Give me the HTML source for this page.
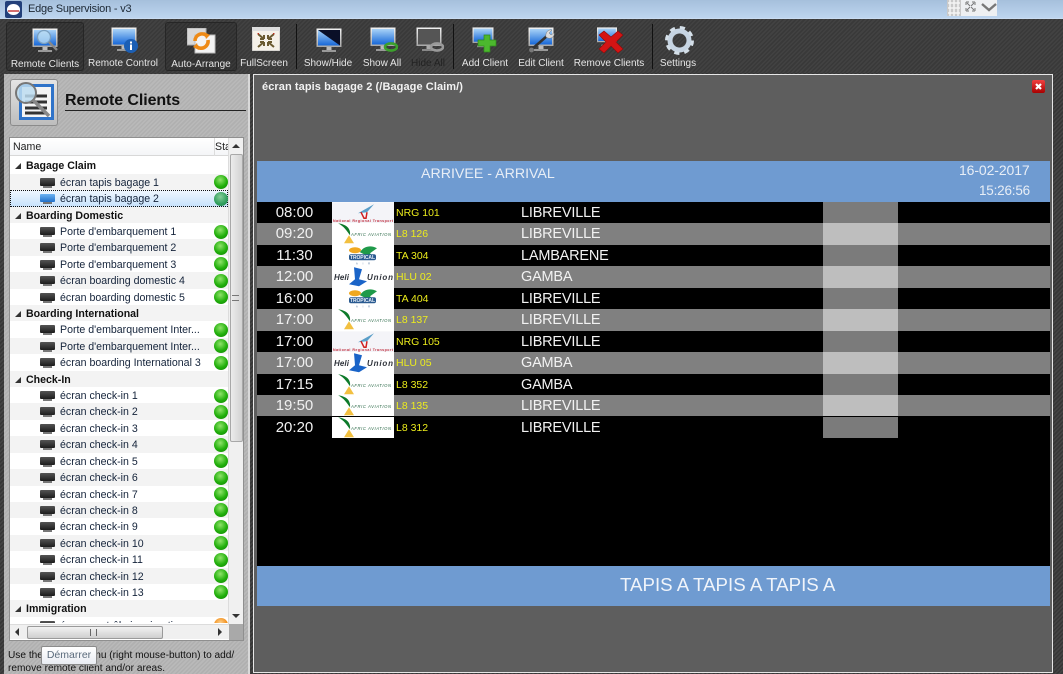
<!DOCTYPE html>
<html><head><meta charset="utf-8"><title>Edge Supervision - v3</title>
<style>
*{box-sizing:border-box}
html,body{margin:0;padding:0;background:#222}
#root{position:relative;width:1063px;height:674px;overflow:hidden;font-family:"Liberation Sans",sans-serif;background:#333;filter:blur(.25px)}
.abs,#root>div,#root>svg{position:absolute}
#title{left:0;top:0;width:1063px;height:19px;background:linear-gradient(#a6c0dc,#bdd5ef);border-bottom:1px solid #c9dcf2}
#title span{position:absolute;left:28px;top:2px;font-size:11px;letter-spacing:-.2px;color:#1c2733;line-height:15px}
#tb{left:0;top:19px;width:1063px;height:54px;background:repeating-linear-gradient(135deg,#424242 0 1.5px,#393939 1.5px 3px)}
#below{left:0;top:73px;width:1063px;height:601px;background:repeating-linear-gradient(135deg,#444 0 1.5px,#363636 1.5px 3px)}
.sel{top:22px;height:49px;border:1px solid #262626;border-radius:3px;background:repeating-linear-gradient(135deg,#393939 0 1.5px,#303030 1.5px 3px)}
.sep{top:24px;width:1px;height:45px;background:#111}
.lb{top:57px;font-size:10px;line-height:13px;color:#e6e6e6;transform:translateX(-50%);white-space:nowrap}
#left{left:4px;top:74px;width:244px;height:600px;background:repeating-linear-gradient(135deg,#b9b9b9 0 1.5px,#b0b0b0 1.5px 3px)}
#leftedge{left:248px;top:74px;width:2px;height:600px;background:#d9d9d9}
#iconbox{left:10px;top:79px;width:48px;height:47px;background:linear-gradient(#e4e4e4,#bdbdbd);border:1px solid #8b8b8b;border-radius:3px}
#h1{left:65px;top:92px;font-size:16px;line-height:18px;font-weight:bold;color:#111;letter-spacing:-.1px;white-space:nowrap}
#h1line{left:65px;top:110px;width:181px;height:1px;background:#222}
#list{left:9px;top:137px;width:235px;height:504px;background:#fff;border:1px solid #8f8f8f;overflow:hidden}
#hdr{position:absolute;left:0;top:0;width:219px;height:18px;background:linear-gradient(#fff,#f4f5f7);border-bottom:1px solid #d8d8d8;font-size:10.6px;line-height:19px;color:#222}
#hdr i{position:absolute;left:204px;top:0;width:1px;height:18px;background:#dcdcdc}
#hdr span{position:absolute;font-style:normal}
#rows{position:absolute;left:0;top:19.4px;width:218px;height:466px;overflow:hidden}
.r{position:relative;height:16.41px;font-size:10.6px;line-height:19px;color:#14233a;white-space:nowrap;overflow:hidden}
.r:nth-child(even){background:#f3f3f3}
.g{font-weight:bold;color:#111;padding-left:16px}
.g:before{content:"";position:absolute;left:5px;top:6px;border-style:solid;border-width:0 0 6px 6px;border-color:transparent transparent #333 transparent}
.c{padding-left:50px}
.c:before{content:"";position:absolute;left:30px;top:4px;width:15px;height:8px;background:linear-gradient(#555,#1c1c1c);border-radius:1px}
.c:after{content:"";position:absolute;left:33px;top:12px;width:9px;height:2px;background:#777}
.d{position:absolute;left:204px;top:1.500px;width:14px;height:14px;border-radius:50%;background:radial-gradient(circle at 45% 35%,#8fe36a,#22b00c 55%,#0e7f04)}
.s{background:linear-gradient(#f0f7fe,#c6e1fb)!important;outline:1px dotted #111;outline-offset:-1px}
.s:before{background:linear-gradient(#6db3f2,#1f6fc9)}
.s .d{background:radial-gradient(circle at 45% 35%,#86cf9a,#2f9e5c 60%,#1c7d48)}
.o{background:radial-gradient(circle at 45% 35%,#ffd08a,#f08a14 60%)}
#vsb{position:absolute;left:218px;top:0;width:15px;height:486px;background:#f0f0f0;border-left:1px solid #dcdcdc}
#vth{position:absolute;left:1px;top:16px;width:13px;height:288px;background:linear-gradient(90deg,#ececec,#d2d2d2);border:1px solid #a8a8a8;border-radius:2px}
#hsb{position:absolute;left:0;top:486px;width:219px;height:15px;background:#f0f0f0;border-top:1px solid #dcdcdc}
#hth{position:absolute;left:17px;top:1px;width:136px;height:13px;background:linear-gradient(#f2f2f2,#cfcfcf);border:1px solid #9a9a9a;border-radius:2px}
#cor{position:absolute;left:219px;top:486px;width:14px;height:16px;background:#a9a9a9}
.ar{position:absolute;width:0;height:0;border-style:solid}
#help{left:8px;top:650px;font-size:10.15px;line-height:12.5px;color:#111;white-space:nowrap}
#tip{left:41px;top:646px;width:56px;height:19px;background:linear-gradient(#fff,#e9ecf2);border:1px solid #8c8c8c;border-radius:2px;font-size:10.5px;line-height:17px;text-align:center;color:#5b6b7c}
#win{left:253px;top:74px;width:800px;height:599px;background:#5e5e5e;border:1px solid #e6e6e6}
#wt{left:262px;top:81px;font-size:11px;letter-spacing:.08px;line-height:13px;font-weight:bold;color:#f2f2f2;white-space:nowrap}
#cl{left:1032px;top:80px;width:13px;height:13px;background:linear-gradient(#f04040,#a80000);border-radius:2px}
#blue{left:257px;top:161px;width:793px;height:41px;background:#6f9bd1}
#blue div{position:absolute;color:#e8eef6;white-space:nowrap}
#black{left:257px;top:202px;width:793px;height:364px;background:#000}
.f{position:absolute;left:0;width:793px;height:21.45px;color:#f0f0f0;font-size:15px}
.f.z{background:#808080}
.f b{position:absolute;left:566px;width:75px;top:0;bottom:0;background:#7b7b7b}
.f.z b{background:#bebebe}
.f u{position:absolute;left:0;width:75px;text-align:center;top:0;line-height:22px;text-decoration:none;font-size:15px}
.f em{position:absolute;left:139px;top:0;line-height:23px;font-style:normal;font-size:10.5px;color:#ecec1c}
.f s{position:absolute;left:264px;top:0;line-height:22px;text-decoration:none;font-size:14.5px;letter-spacing:-.2px;color:#f2f2f2}
.f svg{position:absolute;left:75px;top:0;width:62px;height:21.45px;background:#fff}
#band{left:257px;top:566px;width:793px;height:40px;background:#6f9bd1;color:#f0f4fa;font-size:18.7px;line-height:38px}
#band span{position:absolute;left:363px;white-space:nowrap}
</style></head><body><div id="root">
<svg width="0" height="0" style="position:absolute"><defs>
<linearGradient id="sc" x1="0" y1="0" x2="0" y2="1"><stop offset="0" stop-color="#a9d3f7"/><stop offset="1" stop-color="#1667d8"/></linearGradient>
<linearGradient id="bz" x1="0" y1="0" x2="0" y2="1"><stop offset="0" stop-color="#f2f2f2"/><stop offset="1" stop-color="#a8a8a8"/></linearGradient>
<symbol id="mon" viewBox="0 0 26 25"><rect x=".5" y=".5" width="25" height="18.5" fill="url(#bz)"/><rect x="2" y="2" width="22" height="15.5" fill="url(#sc)"/><rect x="10.5" y="19" width="5" height="3" fill="#bbb"/><rect x="6" y="22" width="14" height="2" fill="#999"/></symbol>
<symbol id="nrg" viewBox="0 0 62 21"><rect width="62" height="21" fill="#f4f4f8"/><path d="M26 11 L42 2 L35 10Z" fill="#5a9ec8"/><path d="M29 10l3 6h2l1-6" stroke="#d02020" fill="none" stroke-width="1.5"/><text x="1" y="20" font-size="3.6" fill="#c03040" font-weight="bold" textLength="60">National Regional Transport</text></symbol>
<symbol id="afr" viewBox="0 0 62 21"><rect width="62" height="21" fill="#fff"/><path d="M6 0 C14 1 19 5 18 12 C15 8 12 3 6 0Z" fill="#0d7a2a"/><path d="M17 12 L22 20 L12 20Z" fill="#f2c040"/><text x="19" y="13" font-size="4.2" font-style="italic" fill="#2b6a48" textLength="40">AFRIC AVIATION</text></symbol>
<symbol id="tro" viewBox="0 0 62 21"><rect width="62" height="21" fill="#fff"/><ellipse cx="23" cy="5" rx="6" ry="3" fill="#f0a820"/><path d="M28 7 C32 0 40 0 45 3 L38 8 L42 12 L34 10Z" fill="#1f9a4a"/><rect x="17" y="9" width="27" height="6" rx="2" fill="#2a5a90"/><text x="18" y="14" font-size="5" font-weight="bold" fill="#e6eef8" textLength="25">TROPICAL</text><text x="24" y="19.5" font-size="2.6" fill="#5a7aa0" textLength="14">AIR</text></symbol>
<symbol id="hel" viewBox="0 0 62 21"><rect width="62" height="21" fill="#fff"/><text x="2" y="14" font-size="8" font-weight="bold" font-style="italic" fill="#30343c" textLength="15">Heli</text><path d="M22 1 L30 3 L27 13 L35 15 L27 20 L17 18 L23 13Z" fill="#1a64c8"/><text x="35" y="14" font-size="8" font-weight="bold" font-style="italic" fill="#30343c" textLength="26">Union</text></symbol>
</defs></svg>

<div id="title">
<svg width="17" height="17" style="position:absolute;left:5px;top:1px" viewBox="0 0 17 17"><rect width="17" height="17" rx="2" fill="#23407a"/><ellipse cx="8.5" cy="8.5" rx="6.5" ry="5.5" fill="#fff"/><path d="M3 10h11" stroke="#c03030" stroke-width="1.4"/></svg>
<span>Edge Supervision - v3</span></div>

<div id="tb"></div>
<div class="sel" style="left:6px;width:78px"></div>
<div class="sel" style="left:165px;width:72px"></div>
<div class="sep" style="left:296px"></div><div class="sep" style="left:453px"></div><div class="sep" style="left:652px"></div>

<svg style="left:32px;top:28px" width="28" height="26" viewBox="0 0 28 26"><use href="#mon" width="26" height="25"/><circle cx="12" cy="9" r="6.5" fill="#bfe0f4" fill-opacity=".75" stroke="#7ba0c0" stroke-width="1.3"/><path d="M17 14l8 8" stroke="#888" stroke-width="2.4"/></svg>
<svg style="left:111px;top:27px" width="28" height="27" viewBox="0 0 28 27"><use href="#mon" width="26" height="25"/><circle cx="20" cy="19" r="7" fill="#1c5fb4"/><rect x="19" y="17.5" width="2" height="5.5" fill="#fff"/><rect x="19" y="14.5" width="2" height="2" fill="#fff"/></svg>
<svg style="left:187px;top:28px" width="29" height="26" viewBox="0 0 29 26"><rect x="0" y="0" width="19" height="17" fill="#d8d8d8" stroke="#aaa"/><rect x="8" y="7" width="20" height="18" fill="#f3f3f3" stroke="#bbb"/><path d="M8 13a7 7 0 0 1 12-5" fill="none" stroke="#ee8a16" stroke-width="3.6"/><path d="M21 12a7 7 0 0 1-12 6" fill="none" stroke="#ee8a16" stroke-width="3.6"/><path d="M17 4l6 3-4 4zM12 22l-6-3 4-4z" fill="#ee8a16"/></svg>
<svg style="left:252px;top:27px" width="28" height="24" viewBox="0 0 28 24"><rect width="28" height="24" fill="#f5f1e8" stroke="#bbb"/><rect width="28" height="4" fill="#ddd"/><path d="M6 7l6 5M12 12h-4M12 12v-4M22 7l-6 5M16 12h4M16 12v-4M6 20l6-5M12 15h-4M12 15v4M22 20l-6-5M16 15h4M16 15v4" stroke="#6a5a30" stroke-width="2" fill="none"/><path d="M5 6l2 0 0 2zM23 6l-2 0 0 2z" fill="#c03020"/></svg>
<svg style="left:316px;top:28px" width="26" height="25" viewBox="0 0 26 25"><use href="#mon" width="26" height="25"/><path d="M2 2h22v15.5z" fill="#0a0f28"/></svg>
<svg style="left:370px;top:27px" width="28" height="26" viewBox="0 0 28 26"><use href="#mon" width="26" height="25"/><ellipse cx="21" cy="20" rx="6" ry="3.6" fill="none" stroke="#3ca02c" stroke-width="2.6"/></svg>
<svg style="left:416px;top:27px" width="28" height="26" viewBox="0 0 28 26"><rect x=".5" y=".5" width="25" height="18.5" fill="url(#bz)"/><rect x="2" y="2" width="22" height="15.5" fill="#555"/><rect x="10.5" y="19" width="5" height="3" fill="#aaa"/><rect x="6" y="22" width="14" height="2" fill="#888"/><ellipse cx="21" cy="20" rx="6" ry="3.6" fill="none" stroke="#999" stroke-width="2.6"/></svg>
<svg style="left:472px;top:27px" width="28" height="27" viewBox="0 0 28 27"><use href="#mon" width="22" height="21"/><path d="M12 8h6v5h6v6h-6v6h-6v-6H6v-6h6z" fill="#4cb82e" stroke="#2f8a1c" stroke-width=".7"/></svg>
<svg style="left:528px;top:27px" width="27" height="27" viewBox="0 0 27 27"><use href="#mon" width="26" height="25"/><path d="M3 23L19 9" stroke="#333" stroke-width="2.6"/><path d="M18 10c-1-4 2-8 6-7l-3 3 2 2 3-2c1 4-4 7-8 4z" fill="#dcdcdc" stroke="#777" stroke-width=".5"/><circle cx="3.500" cy="23" r="2.400" fill="#777"/></svg>
<svg style="left:596px;top:27px" width="28" height="27" viewBox="0 0 28 27"><use href="#mon" width="22" height="20"/><path d="M3 8l5-4 7 6 7-6 5 4-7 7 7 7-5 4-7-7-7 7-5-4 7-7z" fill="#d41414" stroke="#8e0a0a" stroke-width=".6"/></svg>
<svg style="left:665px;top:26px" width="29" height="29" viewBox="0 0 29 29"><circle cx="14.500" cy="14.500" r="9.500" fill="none" stroke="#c6d4e2" stroke-width="5"/><circle cx="14.500" cy="14.500" r="13" fill="none" stroke="#d4dfe8" stroke-width="3" stroke-dasharray="5.200 5"/></svg>

<div class="lb" style="left:45px;top:58px">Remote Clients</div>
<div class="lb" style="left:123px">Remote Control</div>
<div class="lb" style="left:201px;top:58px">Auto-Arrange</div>
<div class="lb" style="left:264px">FullScreen</div>
<div class="lb" style="left:328px">Show/Hide</div>
<div class="lb" style="left:382px">Show All</div>
<div class="lb" style="left:428px;color:#222">Hide All</div>
<div class="lb" style="left:485px">Add Client</div>
<div class="lb" style="left:541px">Edit Client</div>
<div class="lb" style="left:609px">Remove Clients</div>
<div class="lb" style="left:678px">Settings</div>

<div id="below"></div>
<div id="left"></div><div id="leftedge"></div>
<div id="iconbox"></div>
<svg style="left:13px;top:81px" width="43" height="43" viewBox="0 0 43 43"><rect x="6" y="3" width="35" height="36" fill="#2f73c9"/><rect x="9" y="6" width="29" height="30" fill="#f4f4f4"/><path d="M12 15h22M12 21h22M12 27h22M12 32h22" stroke="#333" stroke-width="3"/><circle cx="13" cy="12" r="10" fill="#bcdcf0" fill-opacity=".85" stroke="#777" stroke-width="2"/><path d="M20 19l16 16" stroke="#888" stroke-width="3.500"/></svg>
<div id="h1">Remote Clients</div><div id="h1line"></div>

<div id="list">
<div id="hdr"><span style="left:3px">Name</span><i></i><span style="left:205px;width:13px;overflow:hidden">Sta</span></div>
<div id="rows">
<div class="r g">Bagage Claim</div>
<div class="r c">écran tapis bagage 1<span class="d"></span></div>
<div class="r c s">écran tapis bagage 2<span class="d"></span></div>
<div class="r g">Boarding Domestic</div>
<div class="r c">Porte d'embarquement 1<span class="d"></span></div>
<div class="r c">Porte d'embarquement 2<span class="d"></span></div>
<div class="r c">Porte d'embarquement 3<span class="d"></span></div>
<div class="r c">écran boarding domestic 4<span class="d"></span></div>
<div class="r c">écran boarding domestic 5<span class="d"></span></div>
<div class="r g">Boarding International</div>
<div class="r c">Porte d'embarquement Inter...<span class="d"></span></div>
<div class="r c">Porte d'embarquement Inter...<span class="d"></span></div>
<div class="r c">écran boarding International 3<span class="d"></span></div>
<div class="r g">Check-In</div>
<div class="r c">écran check-in 1<span class="d"></span></div>
<div class="r c">écran check-in 2<span class="d"></span></div>
<div class="r c">écran check-in 3<span class="d"></span></div>
<div class="r c">écran check-in 4<span class="d"></span></div>
<div class="r c">écran check-in 5<span class="d"></span></div>
<div class="r c">écran check-in 6<span class="d"></span></div>
<div class="r c">écran check-in 7<span class="d"></span></div>
<div class="r c">écran check-in 8<span class="d"></span></div>
<div class="r c">écran check-in 9<span class="d"></span></div>
<div class="r c">écran check-in 10<span class="d"></span></div>
<div class="r c">écran check-in 11<span class="d"></span></div>
<div class="r c">écran check-in 12<span class="d"></span></div>
<div class="r c">écran check-in 13<span class="d"></span></div>
<div class="r g">Immigration</div>
<div class="r c">écran contrôle immigration<span class="d o"></span></div>
</div>
<div id="vsb"><div class="ar" style="left:3px;top:6px;border-width:0 4px 4px 4px;border-color:transparent transparent #333"></div><div id="vth"></div><div style="position:absolute;left:3px;top:157px;width:7px;height:6px;border-top:1px solid #777;border-bottom:1px solid #777"></div><div class="ar" style="left:3px;top:476px;border-width:4px 4px 0 4px;border-color:#333 transparent transparent"></div></div>
<div id="hsb"><div class="ar" style="left:5px;top:3px;border-width:4px 4px 4px 0;border-color:transparent #333 transparent transparent"></div><div id="hth"><span style="position:absolute;left:62px;top:2px;width:7px;height:7px;border-left:1px solid #666;border-right:1px solid #666"></span></div><div class="ar" style="left:208px;top:3px;border-width:4px 0 4px 4px;border-color:transparent transparent transparent #333"></div></div>
<div id="cor"></div>
</div>

<div id="help">Use the context menu (right mouse-button) to add/<br>remove remote client and/or areas.</div>
<div id="tip">Démarrer</div>

<div id="win"></div>
<div id="wt">écran tapis bagage 2 (/Bagage Claim/)</div>
<div id="cl"><svg width="13" height="13" viewBox="0 0 13 13" style="display:block"><path d="M4 4l5 5M9 4l-5 5" stroke="#fff" stroke-width="2.200"/></svg></div>

<div id="blue"><div style="left:164px;top:5px;font-size:14.2px;line-height:17px">ARRIVEE - ARRIVAL</div><div style="left:702px;top:1px;font-size:14px;line-height:17px;letter-spacing:-.1px">16-02-2017</div><div style="left:722px;top:21px;font-size:13.5px;line-height:17px;letter-spacing:-.2px">15:26:56</div></div>

<div id="black">
<div class="f" style="top:0"><b></b><u>08:00</u><svg viewBox="0 0 62 21"><use href="#nrg"/></svg><em>NRG 101</em><s>LIBREVILLE</s></div>
<div class="f z" style="top:21.45px"><b></b><u>09:20</u><svg viewBox="0 0 62 21"><use href="#afr"/></svg><em>L8 126</em><s>LIBREVILLE</s></div>
<div class="f" style="top:42.9px"><b></b><u>11:30</u><svg viewBox="0 0 62 21"><use href="#tro"/></svg><em>TA 304</em><s>LAMBARENE</s></div>
<div class="f z" style="top:64.35px"><b></b><u>12:00</u><svg viewBox="0 0 62 21"><use href="#hel"/></svg><em>HLU 02</em><s>GAMBA</s></div>
<div class="f" style="top:85.8px"><b></b><u>16:00</u><svg viewBox="0 0 62 21"><use href="#tro"/></svg><em>TA 404</em><s>LIBREVILLE</s></div>
<div class="f z" style="top:107.25px"><b></b><u>17:00</u><svg viewBox="0 0 62 21"><use href="#afr"/></svg><em>L8 137</em><s>LIBREVILLE</s></div>
<div class="f" style="top:128.7px"><b></b><u>17:00</u><svg viewBox="0 0 62 21"><use href="#nrg"/></svg><em>NRG 105</em><s>LIBREVILLE</s></div>
<div class="f z" style="top:150.15px"><b></b><u>17:00</u><svg viewBox="0 0 62 21"><use href="#hel"/></svg><em>HLU 05</em><s>GAMBA</s></div>
<div class="f" style="top:171.6px"><b></b><u>17:15</u><svg viewBox="0 0 62 21"><use href="#afr"/></svg><em>L8 352</em><s>GAMBA</s></div>
<div class="f z" style="top:193.05px"><b></b><u>19:50</u><svg viewBox="0 0 62 21"><use href="#afr"/></svg><em>L8 135</em><s>LIBREVILLE</s></div>
<div class="f" style="top:214.5px"><b></b><u>20:20</u><svg viewBox="0 0 62 21"><use href="#afr"/></svg><em>L8 312</em><s>LIBREVILLE</s></div>
</div>
<div id="band"><span>TAPIS A TAPIS A TAPIS A</span></div>

<svg style="left:947px;top:0" width="50" height="16" viewBox="0 0 50 16"><rect width="50" height="16" fill="#eef0f2"/><rect width="14" height="16" fill="#c8c8c8"/><path d="M1 3h12M1 8h12M1 13h12M3 0v16M7 0v16M11 0v16" stroke="#fff" stroke-width="1.500" opacity=".8"/><path d="M19 2h3M19 2v3M28 2h-3M28 2v3M19 11h3M19 11v-3M28 11h-3M28 11v-3M20 3l3 3M27 3l-3 3M20 10l3-3M27 10l-3-3" stroke="#777" stroke-width="1" fill="none"/><path d="M35 4l7 6 7-6" stroke="#777" stroke-width="2.400" fill="none"/></svg>
</div></body></html>
